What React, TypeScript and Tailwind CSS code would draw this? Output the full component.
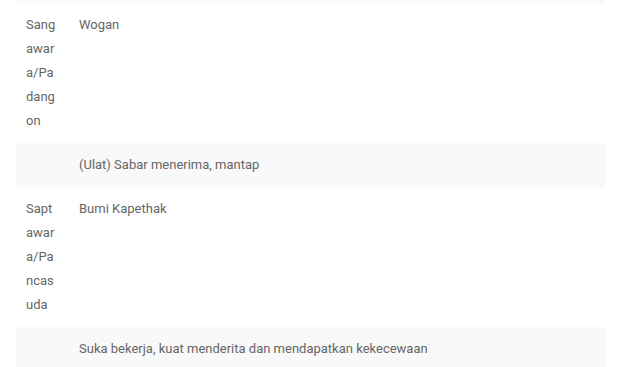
const rows = [
  { name: 'Sangawara/Padangon', value: 'Wogan', note: '(Ulat) Sabar menerima, mantap' },
  {
    name: 'Saptawara/Pancasuda',
    value: 'Bumi Kapethak',
    note: 'Suka bekerja, kuat menderita dan mendapatkan kekecewaan',
  },
]

export default function App() {
  return (
    <div className="min-h-screen bg-white pl-4 pr-[15px] font-['Roboto',sans-serif] text-[13px] leading-6 text-[#666]">
      {/* tail of the previous row */}
      <div className="h-[3px] bg-[#f9f9f9]" />
      <table className="w-full table-fixed border-collapse">
        <colgroup>
          <col className="w-[53px]" />
          <col />
        </colgroup>
        <tbody>
          {rows.map((r) => (
            <>
              <tr key={r.name}>
                <td className="break-all p-[10px] align-top">{r.name}</td>
                <td className="p-[10px] align-top">{r.value}</td>
              </tr>
              <tr key={r.name + '-note'} className="bg-[#f9f9f9]">
                <td className="p-[10px]" />
                <td className="p-[10px] align-top">{r.note}</td>
              </tr>
            </>
          ))}
        </tbody>
      </table>
    </div>
  )
}
